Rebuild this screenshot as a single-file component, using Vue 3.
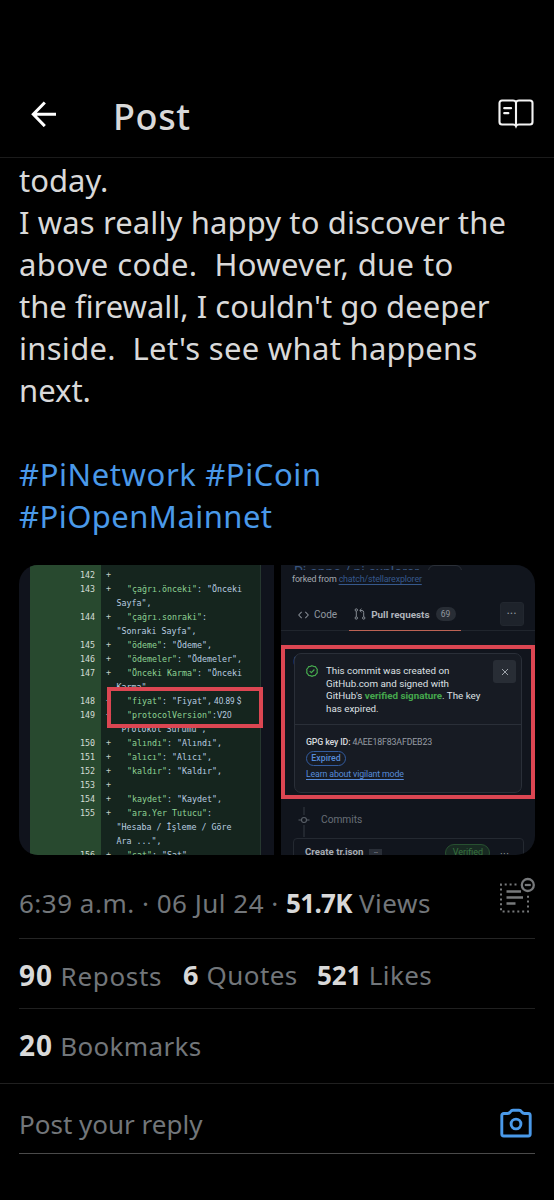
<template>
  <div class="screen">
    <header class="top-bar">
      <svg class="back" viewBox="0 0 26 26" fill="none" stroke="#fff" stroke-width="3">
        <path d="M25 13.3H2.5M13.8 1.5 2.3 13.3l11.5 11.8" />
      </svg>
      <h1>Post</h1>
      <svg class="reader" viewBox="0 0 36 30" fill="none" stroke="#f4f4f4" stroke-width="2.1" stroke-linecap="round">
        <path d="M18 3.3C17.4 1.900 16.500 1.500 15 1.500H4A2.500 2.500 0 0 0 1.500 4v19A2.500 2.500 0 0 0 4 25.500h11c1.500 0 2.500.3 3 1.500 .5-1.200 1.500-1.500 3-1.500h11a2.500 2.500 0 0 0 2.500-2.500V4A2.500 2.500 0 0 0 32 1.500H21c-1.500 0-2.400.4-3 1.800v23.700" />
        <path d="M6.300 9.200H13M6.300 14.200h4" stroke-width="2.300" />
      </svg>
    </header>

    <main>
      <div class="post-text">
        <p v-for="(line, i) in postLines" :key="i" :class="'l' + i">{{ line }}</p>
        <p class="tags t0"><a>#PiNetwork</a> <a>#PiCoin</a></p>
        <p class="tags t1"><a>#PiOpenMainnet</a></p>
      </div>

      <div class="media">
        <section class="shot diff">
          <div class="rows">
            <div v-for="(row, i) in diffRows" :key="i" class="row">
              <span class="num">{{ row.n }}</span>
              <code><span class="plus">{{ row.n ? '+' : '' }}</span><span v-if="row.k" class="key">{{ row.k }}</span><span v-if="row.v" :class="{ wrap: !row.k }">{{ row.v }}</span><span v-if="row.edit" class="edit">{{ row.edit }}</span></code>
            </div>
          </div>
          <div class="mark"></div>
        </section>

        <section class="shot github">
          <div class="repo-name">Pi-apps / pi-explorer <i></i></div>
          <p class="fork">forked from <a>chatch/stellarexplorer</a></p>
          <nav class="tabs">
            <svg class="code-icon" viewBox="0 0 12 10" fill="none" stroke="#858b93" stroke-width="1.100"><path d="M4 1.500.8 5 4 8.500M8 1.500 11.200 5 8 8.500" /></svg>
            <span class="code-tab">Code</span>
            <div class="active">
              <svg viewBox="0 0 12 12" fill="none" stroke="#858b93" stroke-width="1">
                <circle cx="2.300" cy="2" r="1.200" /><circle cx="2.300" cy="10" r="1.200" /><circle cx="9.700" cy="10" r="1.200" />
                <path d="M2.300 3.200v5.600M9.700 8.800V4.500Q9.700 2.500 8 2.500H6M7.500.8 5.700 2.500l1.800 1.700" />
              </svg>
              <b>Pull requests</b>
              <em>69</em>
            </div>
            <div class="more">•••</div>
          </nav>
          <div class="behind">Create tr.json</div>
          <div class="commits">
            <svg viewBox="0 0 12 30" fill="none" stroke="#5a6068" stroke-width="1.100">
              <path d="M6 0v8M6 18v12" stroke="#292e36" stroke-width="1.500" />
              <path d="M.5 13h3M8.500 13h3" /><circle cx="6" cy="13" r="2.500" />
            </svg>
            <span>Commits</span>
          </div>
          <div class="commit-card">
            <b>Create tr.json</b><i>•••</i>
            <span class="verified">Verified</span>
            <span class="dots">•••</span>
          </div>
          <div class="alert">
            <div class="popup">
              <div class="signed">
                <svg viewBox="0 0 12 12" fill="none" stroke="#45a84d" stroke-width="1.200">
                  <path d="M6 .7 7.600 1.300 9.300 1.600 10.300 3 11.300 4.400 11.100 6 11.300 7.700 10.200 9 9.200 10.400 7.600 10.700 6 11.400 4.400 10.700 2.700 10.400 1.800 9 .7 7.700.9 6 .7 4.400 1.800 3 2.700 1.600 4.400 1.300Z" />
                  <path d="m3.700 6.100 1.700 1.600L8.400 4.500" />
                </svg>
                <p>This commit was created on<br>GitHub.com and signed with<br>GitHub's <b>verified signature</b>. The key<br>has expired.</p>
                <div class="close"><svg viewBox="0 0 8 8" stroke="#9da3aa" stroke-width="1"><path d="m1 1 6 6M7 1 1 7" /></svg></div>
              </div>
              <div class="key-info">
                <p><strong>GPG key ID:</strong> 4AEE18F83AFDEB23</p>
                <span class="expired">Expired</span>
                <a>Learn about vigilant mode</a>
              </div>
            </div>
          </div>
        </section>
      </div>

      <div class="meta">
        <span>6:39 a.m. · 06 Jul 24 · <b>51.7K</b> Views</span>
        <svg viewBox="0 0 38 38" fill="none" stroke="#77797b">
          <path d="M19.500 7.500H4v27h27V16" stroke-width="2" stroke-dasharray="2 2.900" />
          <path d="M9.500 14.500H24M9.500 20.500H26M9.500 26.500h9" stroke-width="2.300" />
          <circle cx="30.800" cy="8" r="6" stroke-width="2.300" />
          <path d="M27.800 8h6" stroke-width="2.200" />
        </svg>
      </div>
      <div class="stats">
        <span class="reposts"><b>90</b> Reposts</span>
        <span class="quotes"><b>6</b> Quotes</span>
        <span class="likes"><b>521</b> Likes</span>
      </div>
      <div class="bookmarks"><b>20</b> Bookmarks</div>
    </main>

    <footer class="reply">
      <div class="field">
        <span>Post your reply</span>
        <svg viewBox="0 0 32 30" fill="none" stroke="#4a99e9" stroke-width="2.900" stroke-linejoin="round">
          <path d="M3.800 5.500H7.500c1.300 0 2-.6 2.700-1.500.9-1.300 1.600-1.800 2.800-1.800h6c1.200 0 1.900.5 2.800 1.800.7.9 1.400 1.500 2.700 1.500h3.700A2 2 0 0 1 30.200 7.500V26a2 2 0 0 1-2 2H3.800a2 2 0 0 1-2-2V7.500a2 2 0 0 1 2-2Z" />
          <circle cx="16" cy="16" r="4.900" />
        </svg>
      </div>
    </footer>
  </div>
</template>

<script setup>
const postLines = [
  'today.',
  'I was really happy to discover the',
  'above code.\u00a0 However, due to',
  "the firewall, I couldn't go deeper",
  "inside.\u00a0 Let's see what happens",
  'next.',
  '\u00a0',
]

// n = line number, k = json key, v = value, no number means a wrapped line
const diffRows = [
  { n: 142 },
  { n: 143, k: '"çağrı.önceki"', v: ': "Önceki' },
  { v: 'Sayfa",' },
  { n: 144, k: '"çağrı.sonraki"', v: ':' },
  { v: '"Sonraki Sayfa",' },
  { n: 145, k: '"ödeme"', v: ': "Ödeme",' },
  { n: 146, k: '"ödemeler"', v: ': "Ödemeler",' },
  { n: 147, k: '"Önceki Karma"', v: ': "Önceki' },
  { v: 'Karma",' },
  { n: 148, k: '"fiyat"', v: ': "Fiyat",', edit: ' 40.89 $' },
  { n: 149, k: '"protocolVersion"', v: ':', edit: 'V20' },
  { v: '"Protokol Sürümü",' },
  { n: 150, k: '"alındı"', v: ': "Alındı",' },
  { n: 151, k: '"alıcı"', v: ': "Alıcı",' },
  { n: 152, k: '"kaldır"', v: ': "Kaldır",' },
  { n: 153 },
  { n: 154, k: '"kaydet"', v: ': "Kaydet",' },
  { n: 155, k: '"ara.Yer Tutucu"', v: ':' },
  { v: '"Hesaba / İşleme / Göre' },
  { v: 'Ara ...",' },
  { n: 156, k: '"sat"', v: ': "Sat",' },
]
</script>

<style>
body {
  background: #000;
}
</style>

<style scoped>
* {
  box-sizing: border-box;
}
p, h1 {
  margin: 0;
}
.screen {
  width: 554px;
  height: 1200px;
  overflow: hidden;
  background: #000;
  color: #d9d9d9;
  font-family: "Noto Sans", sans-serif;
  white-space: nowrap;
}
.top-bar {
  height: 158px;
  padding: 76px 19px 0 31px;
  border-bottom: 1px solid #1b1b1b;
  display: flex;
  align-items: center;
}
.back {
  width: 26px;
  height: 26px;
  margin-bottom: 6px;
}
h1 {
  margin-left: 56px;
  font-size: 36px;
  font-weight: 500;
  letter-spacing: 0.6px;
}
.reader {
  width: 36px;
  height: 30px;
  margin: 0 1px 5px auto;
}
.post-text {
  padding: 1px 20px 0 19px;
  font-size: 31px;
  line-height: 42px;
}
.l1 {
  letter-spacing: 0.12px;
}
.l2 {
  letter-spacing: 0.38px;
}
.l4 {
  letter-spacing: 0.29px;
}
.tags {
  color: #4a99e9;
}
.t0 {
  letter-spacing: 0.6px;
}
.t1 {
  letter-spacing: 0.45px;
}
.media {
  height: 290px;
  margin: 28px 19px 0;
  display: flex;
  gap: 7px;
  border-radius: 19px;
  overflow: hidden;
}
.shot {
  position: relative;
  overflow: hidden;
}
.diff {
  width: 255px;
  padding: 0 13px 0 11px;
  background: #10131c;
}
.rows {
  height: 290px;
  padding-top: 3px;
  border-right: 1px solid #26372f;
  background: linear-gradient(90deg, #28492f 71px, #15251e 71px);
}
.row {
  height: 14px;
  display: flex;
  font: 8.320px/14px "DejaVu Sans Mono", monospace;
  color: #b9cde0;
}
.num {
  width: 65px;
  text-align: right;
  color: #d4ddd6;
}
code {
  padding-left: 11px;
  font: inherit;
  white-space: pre;
}
.plus {
  display: inline-block;
  width: 21px;
  color: #c3cfc8;
}
.key {
  color: #8ed394;
}
.wrap {
  margin-left: -10.500px;
}
.edit {
  font-family: Roboto, sans-serif;
  font-size: 8.200px;
}
.mark {
  position: absolute;
  left: 88px;
  top: 122px;
  width: 156px;
  height: 41px;
  border: 4.500px solid #dc4652;
}
.github {
  width: 254px;
  background: #11151d;
  font-family: Roboto, sans-serif;
  color: #c9cdd2;
}
.repo-name {
  height: 5px;
  padding-left: 13px;
  font-size: 14px;
  line-height: 0;
  color: #39557f;
  overflow: hidden;
}
.repo-name i {
  display: inline-block;
  width: 34px;
  height: 12px;
  margin-left: 6px;
  border: 1px solid #2a2f37;
  border-radius: 8px;
}
.fork {
  padding-left: 11px;
  font-size: 8.900px;
  line-height: 18px;
  letter-spacing: -0.16px;
  color: #a4a9b0;
}
.fork a {
  color: #36588b;
  text-decoration: underline;
  text-underline-offset: 2px;
}
.tabs {
  height: 43px;
  padding: 10px 11px 0 17px;
  border-bottom: 1px solid #20252d;
  display: flex;
  align-items: flex-start;
  font-size: 10px;
  line-height: 33px;
  color: #9298a0;
}
.code-icon {
  width: 11px;
  height: 10px;
  margin-top: 12px;
}
.code-tab {
  margin-left: 5px;
}
.active {
  width: 112px;
  height: 33px;
  margin-left: 12px;
  padding-left: 5px;
  border-bottom: 1px solid #bd6355;
  display: flex;
  align-items: center;
}
.active svg {
  width: 12px;
  height: 12px;
}
.active b {
  margin-left: 5px;
  font-size: 9.900px;
  color: #afb4bb;
}
.active em {
  width: 20px;
  margin-left: 6px;
  border-radius: 8px;
  background: #282d35;
  font: 8.500px/14px Roboto, sans-serif;
  text-align: center;
}
.more {
  width: 24px;
  height: 24px;
  margin: 4px 0 0 auto;
  border: 1px solid #22272f;
  border-radius: 3px;
  background: #1e232b;
  font-size: 7px;
  line-height: 22px;
  letter-spacing: 1px;
  text-align: center;
}
.behind {
  height: 176px;
  padding: 20px 0 0 12px;
  font-size: 18px;
  line-height: 22px;
}
.commits {
  height: 30px;
  padding-left: 17px;
  display: flex;
  gap: 11px;
  font-size: 10.200px;
  line-height: 25px;
  color: #686e76;
}
.commits svg {
  width: 12px;
  height: 30px;
}
.commit-card {
  height: 40px;
  margin: 1px 11px 0 12px;
  padding: 5px 13px 0 11px;
  border: 1px solid #242931;
  border-radius: 4px;
  display: flex;
  font-size: 9.700px;
  line-height: 15px;
  color: #a7acb3;
}
.commit-card b {
  color: #a7acb3;
}
.commit-card i {
  width: 13px;
  height: 7px;
  margin: 5px 0 0 6px;
  background: #292e37;
  font: 4px/7px Roboto, sans-serif;
  text-align: center;
}
.verified {
  width: 45px;
  height: 18px;
  margin-left: auto;
  border: 1px solid #275030;
  border-radius: 9px;
  background: #182a22;
  font-size: 9px;
  color: #37733f;
  text-align: center;
}
.dots {
  margin-left: 10px;
  font-size: 5px;
  line-height: 20px;
  letter-spacing: 1.500px;
}
.alert {
  position: absolute;
  left: 0;
  top: 80px;
  width: 254px;
  height: 154px;
  padding: 4px 9px 2px;
  border: 4.500px solid #dc4652;
}
.popup {
  height: 140px;
  border: 1px solid #2a2f38;
  border-radius: 7px;
  background: #171b23;
}
.signed {
  height: 71px;
  padding: 11px 5px 0 11px;
  border-bottom: 1px solid #2a2f38;
  display: flex;
  font-size: 9.800px;
  line-height: 12.500px;
  color: #dde0e3;
}
.signed svg {
  width: 12px;
  height: 12px;
}
.signed p {
  margin-left: 8px;
}
.signed b {
  color: #45a84d;
}
.close {
  width: 23px;
  height: 23px;
  margin: -5px 0 0 auto;
  border-radius: 3px;
  background: #282d35;
  display: grid;
  place-items: center;
}
.close svg {
  width: 8px;
  height: 8px;
}
.key-info {
  padding: 11px;
  display: flex;
  flex-direction: column;
  align-items: flex-start;
  font-size: 8.800px;
  line-height: 12px;
  letter-spacing: -0.15px;
  color: #969ca4;
}
.key-info strong {
  font-weight: 500;
  color: #d5d8dc;
}
.expired {
  width: 40px;
  height: 15px;
  margin: 3px 0 2px;
  border: 1px solid #335c9f;
  border-radius: 8px;
  line-height: 13px;
  letter-spacing: 0;
  font-weight: 500;
  color: #568bd9;
  text-align: center;
}
.key-info a {
  color: #568bd9;
  text-decoration: underline;
  text-underline-offset: 2px;
}
.meta {
  height: 84px;
  margin: 0 19px;
  padding-top: 12px;
  border-bottom: 1px solid #252525;
  display: flex;
  align-items: center;
  justify-content: space-between;
  font-size: 26px;
  letter-spacing: 0.5px;
  color: #72767a;
}
.meta b {
  letter-spacing: -0.7px;
}
.meta svg {
  width: 38px;
  height: 38px;
  margin-bottom: 14px;
}
b {
  color: #d9d9d9;
}
.stats, .bookmarks {
  height: 70px;
  margin: 0 19px;
  font-size: 26px;
  line-height: 72px;
  color: #72767a;
}
.reposts b, .bookmarks b {
  font-size: 28px;
  letter-spacing: 1px;
}
.quotes b {
  font-size: 27px;
  letter-spacing: 1px;
}
.likes b {
  letter-spacing: 0;
}
.stats {
  border-bottom: 1px solid #202020;
  display: flex;
}
.reposts {
  width: 164px;
  letter-spacing: 0.7px;
}
.quotes {
  width: 134px;
  letter-spacing: 0.4px;
}
.likes {
  letter-spacing: 0.4px;
}
.bookmarks {
  letter-spacing: 0.35px;
}
.reply {
  margin-top: 4px;
  padding: 0 19px;
  border-top: 1px solid #202020;
}
.field {
  height: 70px;
  border-bottom: 1px solid #4a4a4a;
  display: flex;
  align-items: center;
  justify-content: space-between;
  padding-top: 11px;
  font-size: 26px;
  color: #72767a;
}
.field svg {
  width: 32px;
  height: 30px;
  margin: 0 3px 3px 0;
}
</style>
